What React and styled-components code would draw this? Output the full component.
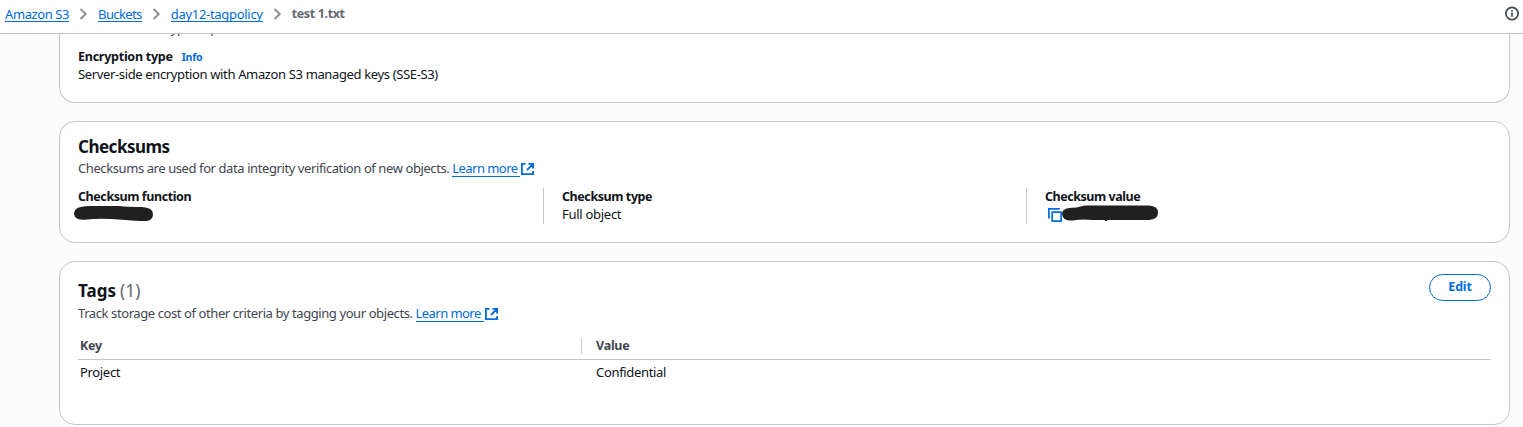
import React from 'react';
import styled, { createGlobalStyle } from 'styled-components';

const color = {
  text: '#0f141a',
  secondary: '#424650',
  muted: '#656871',
  link: '#006ce0',
  border: '#c6c6cd',
  ink: '#202020',
};

const GlobalStyle = createGlobalStyle`
  * { box-sizing: border-box; }
  body {
    margin: 0;
    height: 427px;
    overflow: hidden;
    background: #fcfcfd;
    color: ${color.text};
    font: 400 13px/18px "Noto Sans", "Open Sans", sans-serif;
  }
`;

const TopBar = styled.header`
  display: flex;
  align-items: center;
  justify-content: space-between;
  height: 34px;
  padding: 0 4px 6px 5px;
  background: #fff;
  border-bottom: 1px solid ${color.border};
`;

const Trail = styled.nav`
  display: flex;
  align-items: center;
`;

const Link = styled.a`
  display: inline-block;
  height: ${(p) => p.$h ?? 17}px;
  line-height: 18px;
  color: ${color.link};
  border-bottom: 1px solid ${color.link};
  white-space: pre;
  letter-spacing: ${(p) => p.$ls}px;
`;

const Chevron = styled.svg`
  width: 9px;
  height: 12px;
  margin: 1px 10px 0;
  fill: none;
  stroke: #8c8c94;
  stroke-width: 1.8;
`;

const Crumb = styled.span`
  padding-top: 1px;
  color: ${color.muted};
  font-size: 12.5px;
  font-weight: 700;
  letter-spacing: -0.36px;
`;

const Main = styled.main`
  display: flex;
  flex-direction: column;
  gap: 18px;
  padding: 0 13px 0 59px;
`;

const Panel = styled.section`
  height: ${(p) => p.$height}px;
  padding: ${(p) => p.$pad ?? '0 18px'};
  background: #fff;
  border: 1px solid ${color.border};
  border-radius: 16px;
  ${(p) => p.$cut && 'border-top: 0; border-top-left-radius: 0; border-top-right-radius: 0;'}
`;

const ScrolledLine = styled.div`
  display: flex;
  align-items: flex-end;
  height: 3px;
  margin-bottom: 10px;
  overflow: hidden;
  color: ${color.secondary};
  letter-spacing: -0.36px;
`;

const Label = styled.div`
  height: 18px;
  line-height: 20px;
  font-size: 12.5px;
  font-weight: 700;
  letter-spacing: ${(p) => p.$ls}px;
`;

const Info = styled.span`
  margin-left: 9px;
  color: ${color.link};
  font-size: 10.5px;
  letter-spacing: -0.2px;
`;

const Text = styled.div`
  letter-spacing: ${(p) => p.$ls}px;
  white-space: nowrap;
`;

const Heading = styled.h2`
  margin: 0 0 ${(p) => p.$gap}px;
  font-size: 17px;
  line-height: 22px;
  font-weight: 700;
  letter-spacing: ${(p) => p.$ls}px;
`;

const Count = styled.span`
  margin-left: 4px;
  color: ${color.muted};
  font-size: 17.5px;
  font-weight: 400;
  letter-spacing: 0;
`;

const Description = styled.div`
  display: flex;
  align-items: flex-start;
  height: 18px;
  color: ${color.secondary};
`;

const ExternalIcon = styled.svg`
  width: 14px;
  height: 14px;
  margin-top: 3px;
  fill: none;
  stroke: ${color.link};
  stroke-width: 1.8;
`;

const Columns = styled.div`
  display: grid;
  grid-template-columns: 465px 483px 1fr;
  margin-top: 11px;
`;

const Column = styled.div`
  height: 36px;
  padding-left: ${(p) => (p.$first ? 0 : 18)}px;
  border-left: ${(p) => (p.$first ? 0 : 1)}px solid ${color.border};
`;

const ColumnLabel = styled(Label)`
  height: 17px;
  line-height: 18px;
`;

const Redacted = styled.div`
  display: flex;
  height: 18px;
  margin-left: ${(p) => p.$shift}px;
`;

const Marker = styled.svg`
  flex: none;
  width: ${(p) => p.$width}px;
  height: 18px;
  fill: ${color.ink};
`;

const CopyIcon = styled.svg`
  flex: none;
  width: 15px;
  height: 18px;
  fill: none;
  stroke: ${color.link};
  stroke-width: 1.7;
`;

const TitleRow = styled.div`
  display: flex;
  align-items: flex-start;
  justify-content: space-between;
  height: 30px;
`;

const TagsHeading = styled(Heading)`
  margin-top: 5px;
`;

const Button = styled.button`
  width: 62px;
  height: 27px;
  padding: 0 0 2px;
  border: 1px solid ${color.link};
  border-radius: 14px;
  background: #fff;
  color: ${color.link};
  font: 700 12.5px/18px "Noto Sans", sans-serif;
  letter-spacing: -0.2px;
`;

const Table = styled.div`
  display: grid;
  grid-template-columns: 503px 1fr;
  margin-top: 14px;
`;

const HeadCell = styled.div`
  display: flex;
  height: 24px;
  padding-left: ${(p) => (p.$divided ? 0 : 2)}px;
  border-bottom: 1px solid ${color.border};
  color: ${color.secondary};
  font-size: 12.5px;
  line-height: 20px;
  font-weight: 700;
  letter-spacing: -0.24px;
`;

const Divider = styled.i`
  width: 1px;
  height: 16px;
  margin: 2px 14px 0 0;
  background: ${color.border};
`;

const Cell = styled.div`
  padding: 3px 0 0 ${(p) => p.$indent}px;
  letter-spacing: -0.33px;
`;

const Separator = () => (
  <Chevron viewBox="0 0 9 12">
    <path d="M1.5 1l5.3 5-5.3 5" />
  </Chevron>
);

const External = () => (
  <ExternalIcon viewBox="0 0 14 14">
    <path d="M5.5 1.9H1.9v10.2h11.2V9M8.5 1.9h4.6v4.6M12.8 2.2L7 8" />
  </ExternalIcon>
);

export default function App() {
  return (
    <>
      <GlobalStyle />
      <TopBar>
        <Trail>
          <Link $ls={-0.41}>Amazon S3</Link>
          <Separator />
          <Link $ls={-0.6}>Buckets</Link>
          <Separator />
          <Link $ls={-0.3}>day12-tagpolicy</Link>
          <Separator />
          <Crumb>test 1.txt</Crumb>
        </Trail>
        <svg width="15" height="15" viewBox="0 0 15 15" fill="none" stroke={color.secondary}>
          <circle cx="8" cy="7.5" r="6.1" strokeWidth="1.7" />
          <path d="M8 6.5v4.3M8 4v1.6" strokeWidth="1.6" />
        </svg>
      </TopBar>
      <Main>
        <Panel $height={69} $cut>
          <ScrolledLine>Server-side encryption protects data at rest.</ScrolledLine>
          <Label $ls={-0.25}>
            Encryption type<Info>Info</Info>
          </Label>
          <Text $ls={-0.36}>Server-side encryption with Amazon S3 managed keys (SSE-S3)</Text>
        </Panel>
        <Panel $height={122} $pad="14px 18px 0">
          <Heading $ls={-0.5} $gap={1}>Checksums</Heading>
          <Description>
            <Text $ls={-0.41}>Checksums are used for data integrity verification of new objects.&nbsp;</Text>
            <Link $ls={-0.55} $h={18}>{'Learn more '}</Link>
            <External />
          </Description>
          <Columns>
            <Column $first>
              <ColumnLabel $ls={-0.42}>Checksum function</ColumnLabel>
              <Redacted $shift={-5}>
                <Marker $width={82} viewBox="0 0 82 18">
                  <path d="M8 2Q12 .8 20 1H46Q55 2 69 2Q80 2.5 80 9Q80 15.5 73 16Q63 16 49 14.8Q27 13 14 14.5Q2 16 1 9Q1 3 8 2Z" />
                </Marker>
              </Redacted>
            </Column>
            <Column>
              <ColumnLabel $ls={-0.42}>Checksum type</ColumnLabel>
              <Text $ls={-0.28}>Full object</Text>
            </Column>
            <Column>
              <ColumnLabel $ls={-0.46}>Checksum value</ColumnLabel>
              <Redacted $shift={2}>
                <CopyIcon viewBox="0 0 15 18">
                  <path d="M1.9 13.5V3.9h10.8M5.2 7.2h8.9v8.9H5.2z" />
                </CopyIcon>
                <Marker $width={98} viewBox="0 0 98 18">
                  <path d="M0 9Q0 4 7 3Q14 3 23 .5H87Q96 1 96 7.5Q96 14.5 87 15H31Q20 14 14 15Q1 17.5 0 9ZM43 14.5h3l-1.2 1.4h-2z" />
                </Marker>
              </Redacted>
            </Column>
          </Columns>
        </Panel>
        <Panel $height={164} $pad="12px 18px 0">
          <TitleRow>
            <TagsHeading $ls={0} $gap={0}>
              Tags<Count>(1)</Count>
            </TagsHeading>
            <Button>Edit</Button>
          </TitleRow>
          <Description>
            <Text $ls={-0.41}>Track storage cost of other criteria by tagging your objects.&nbsp;</Text>
            <Link $ls={-0.55} $h={18}>{'Learn more '}</Link>
            <External />
          </Description>
          <Table>
            <HeadCell>Key</HeadCell>
            <HeadCell $divided>
              <Divider />
              Value
            </HeadCell>
            <Cell $indent={2}>Project</Cell>
            <Cell $indent={15}>Confidential</Cell>
          </Table>
        </Panel>
      </Main>
    </>
  );
}
